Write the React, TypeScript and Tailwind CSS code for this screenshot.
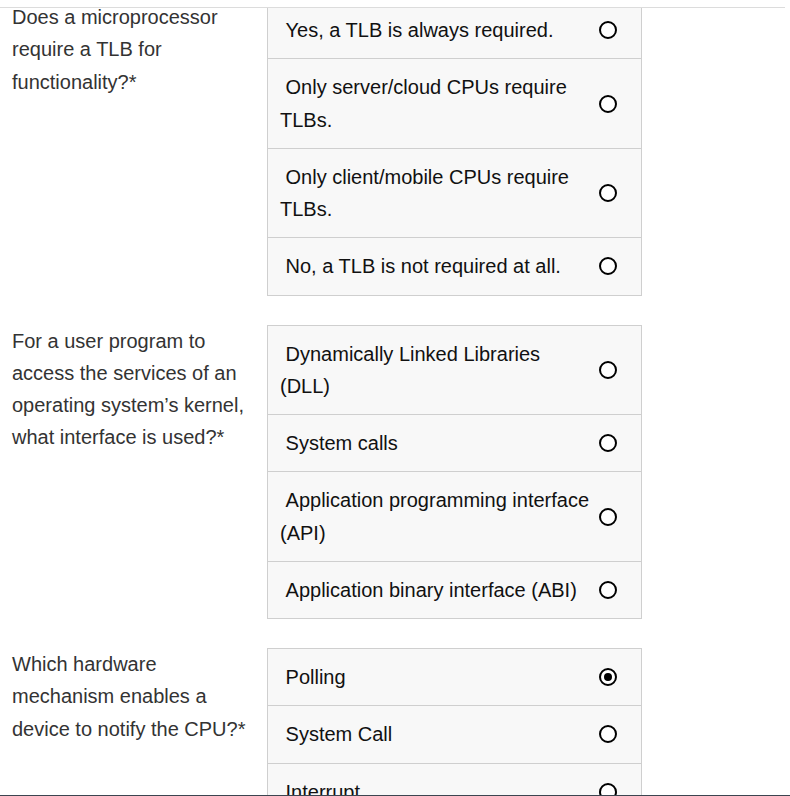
import React from "react";

type Question = {
  text: string;
  options: string[];
  selected?: number;
};

const questions: Question[] = [
  {
    text: "Does a microprocessor require a TLB for functionality?*",
    options: [
      "Yes, a TLB is always required.",
      "Only server/cloud CPUs require TLBs.",
      "Only client/mobile CPUs require TLBs.",
      "No, a TLB is not required at all.",
    ],
  },
  {
    text: "For a user program to access the services of an operating system\u2019s kernel, what interface is used?*",
    options: [
      "Dynamically Linked Libraries (DLL)",
      "System calls",
      "Application programming interface (API)",
      "Application binary interface (ABI)",
    ],
  },
  {
    text: "Which hardware mechanism enables a device to notify the CPU?*",
    options: ["Polling", "System Call", "Interrupt", "Direct Memory Access"],
    selected: 0,
  },
];

function Radio({ checked }: { checked: boolean }) {
  return (
    <span className="w-[18px] h-[18px] shrink-0 rounded-full border-[2.5px] border-black bg-white flex items-center justify-center">
      {checked && <span className="w-[8px] h-[8px] rounded-full bg-black" />}
    </span>
  );
}

function QuestionRow({ q }: { q: Question }) {
  return (
    <div className="flex items-start">
      <div className="w-[267px] shrink-0 px-3 text-[20px] leading-[32.25px] text-[#333]">
        {q.text}
      </div>
      <div className="w-[375px] shrink-0 border border-[#cfcfcf] bg-[#f8f8f8]">
        {q.options.map((opt, i) => (
          <label
            key={opt}
            className={
              "flex items-center pl-[12px] pr-[24px] py-3 " +
              (i > 0 ? "border-t border-[#cfcfcf]" : "")
            }
          >
            <span className="w-[312px] shrink-0 text-[20px] leading-[32.25px] text-[#111]">
              {"\u00a0" + opt}
            </span>
            <span className="ml-[7px]">
              <Radio checked={q.selected === i} />
            </span>
          </label>
        ))}
      </div>
    </div>
  );
}

export default function App() {
  return (
    <div
      className="w-[790px] h-[796px] bg-white flex flex-col overflow-hidden"
      style={{ fontFamily: '"Liberation Sans", Arial, sans-serif' }}
    >
      <div className="h-[7px] shrink-0" />
      <div className="w-[785px] flex-1 min-h-0 border-t border-[#dcdcdc] overflow-hidden">
        <div className="-mt-[7px] flex flex-col gap-[29px]">
          {questions.map((q) => (
            <QuestionRow key={q.text} q={q} />
          ))}
        </div>
      </div>
      <div className="h-px shrink-0 bg-[#3c4550]" />
    </div>
  );
}
